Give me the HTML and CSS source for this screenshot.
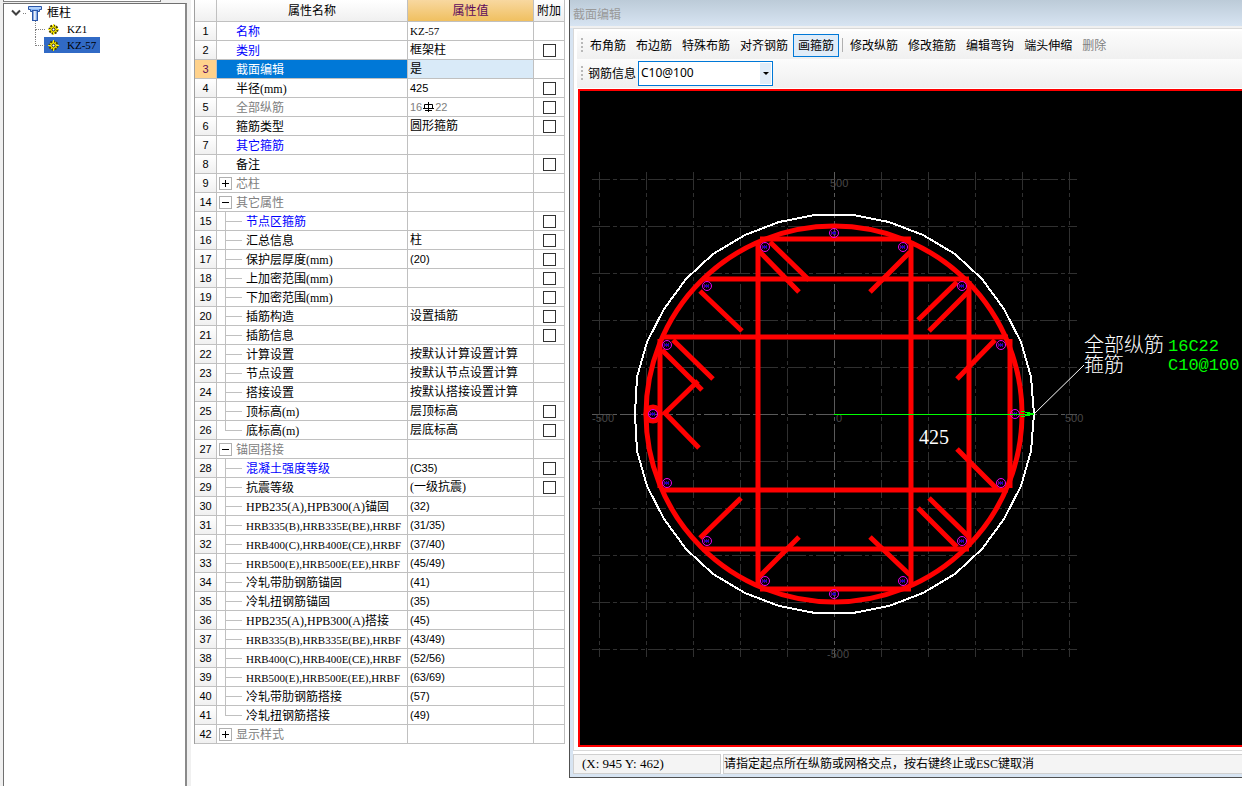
FILE: index.html
```html
<!DOCTYPE html>
<html lang="zh-CN">

<head>
    <meta charset="utf-8">
    <title>截面编辑</title>
    <link rel="stylesheet" href="styles.css">
</head>

<body>
    <div class="app">
        <div class="tree-panel">
            <div class="tree-search"></div>
            <div class="tree">
                <div class="tree-root">
                    <svg class="chevron" width="10" height="8" viewBox="0 0 10 8"><path d="M1 1.5 L5 5.5 L9 1.5" fill="none" stroke="#404040" stroke-width="2"/></svg>
                    <span class="dots"></span>
                    <svg width="16" height="16" viewBox="0 0 16 16">
                        <defs>
                            <linearGradient id="column"><stop offset="0" stop-color="#2a62c8"/><stop offset="0.45" stop-color="#fff"/><stop offset="1" stop-color="#3c78dc"/></linearGradient>
                        </defs>
                        <path d="M1.5 1.5 h13 v3 h-2 v2 h-9 v-2 h-2 z" fill="#8ab8f8" stroke="#2a56a8"/>
                        <rect x="5.500" y="5.500" width="5" height="10" fill="url(#column)" stroke="#2a56a8"/>
                        <path d="M2 3 h12" stroke="#d8ebff"/>
                    </svg>
                    <span class="tree-label">框柱</span>
                </div>
                <ul>
                    <li><a href="#"><svg class="sun" width="11" height="11" viewBox="0 0 11 11"><circle cx="5.500" cy="5.500" r="4" fill="#ffee00" stroke="#4c4600" stroke-width="2" stroke-dasharray="2 1"/><path d="M5.500 0 v3 M5.500 8 v3 M0 5.500 h3 M8 5.500 h3" stroke="#ffee00"/><circle cx="5.500" cy="5.500" r="1.500" fill="#fff" stroke="#222"/></svg>KZ1</a></li>
                    <li><a href="#" class="active"><svg class="sun" width="11" height="11" viewBox="0 0 11 11"><circle cx="5.500" cy="5.500" r="4" fill="#ffee00" stroke="#4c4600" stroke-width="2" stroke-dasharray="2 1"/><path d="M5.500 0 v3 M5.500 8 v3 M0 5.500 h3 M8 5.500 h3" stroke="#ffee00"/><circle cx="5.500" cy="5.500" r="1.500" fill="#fff" stroke="#222"/></svg>KZ-57</a></li>
                </ul>
            </div>
        </div>

        <div class="property-panel">
            <table class="properties">
                <colgroup>
                    <col class="col-num">
                    <col class="col-name">
                    <col class="col-value">
                    <col class="col-extra">
                </colgroup>
                <thead>
                    <tr><th></th><th>属性名称</th><th class="current">属性值</th><th>附加</th></tr>
                </thead>
                <tbody>
                    <tr><th>1</th><td class="name blue">名称</td><td class="steel">KZ-57</td><td></td></tr>
                    <tr><th>2</th><td class="name blue">类别</td><td>框架柱</td><td><input type="checkbox" aria-label="类别"></td></tr>
                    <tr class="selected"><th>3</th><td class="name">截面编辑</td><td>是</td><td></td></tr>
                    <tr><th>4</th><td class="name">半径(mm)</td><td class="num">425</td><td><input type="checkbox" aria-label="半径"></td></tr>
                    <tr><th>5</th><td class="name gray">全部纵筋</td><td class="num gray">16<svg class="grade" width="11" height="10" viewBox="0 0 11 10"><path d="M5.500 0 v10 M1.500 2.500 h8 v4 h-8 z M0 6.500 h11 M2 8.500 h7" fill="none" stroke="#000"/></svg>22</td><td><input type="checkbox" aria-label="全部纵筋"></td></tr>
                    <tr><th>6</th><td class="name">箍筋类型</td><td>圆形箍筋</td><td><input type="checkbox" aria-label="箍筋类型"></td></tr>
                    <tr><th>7</th><td class="name blue">其它箍筋</td><td></td><td></td></tr>
                    <tr><th>8</th><td class="name">备注</td><td></td><td><input type="checkbox" aria-label="备注"></td></tr>
                    <tr><th>9</th><td class="group"><button class="toggle plus" aria-label="展开"></button>芯柱</td><td></td><td></td></tr>
                    <tr><th>14</th><td class="group"><button class="toggle" aria-label="折叠"></button>其它属性</td><td></td><td></td></tr>
                    <tr><th>15</th><td class="child blue">节点区箍筋</td><td></td><td><input type="checkbox" aria-label="节点区箍筋"></td></tr>
                    <tr><th>16</th><td class="child">汇总信息</td><td>柱</td><td><input type="checkbox" aria-label="汇总信息"></td></tr>
                    <tr><th>17</th><td class="child">保护层厚度(mm)</td><td class="num">(20)</td><td><input type="checkbox" aria-label="保护层厚度"></td></tr>
                    <tr><th>18</th><td class="child">上加密范围(mm)</td><td></td><td><input type="checkbox" aria-label="上加密范围"></td></tr>
                    <tr><th>19</th><td class="child">下加密范围(mm)</td><td></td><td><input type="checkbox" aria-label="下加密范围"></td></tr>
                    <tr><th>20</th><td class="child">插筋构造</td><td>设置插筋</td><td><input type="checkbox" aria-label="插筋构造"></td></tr>
                    <tr><th>21</th><td class="child">插筋信息</td><td></td><td><input type="checkbox" aria-label="插筋信息"></td></tr>
                    <tr><th>22</th><td class="child">计算设置</td><td>按默认计算设置计算</td><td></td></tr>
                    <tr><th>23</th><td class="child">节点设置</td><td>按默认节点设置计算</td><td></td></tr>
                    <tr><th>24</th><td class="child">搭接设置</td><td>按默认搭接设置计算</td><td></td></tr>
                    <tr><th>25</th><td class="child">顶标高(m)</td><td>层顶标高</td><td><input type="checkbox" aria-label="顶标高"></td></tr>
                    <tr><th>26</th><td class="child last">底标高(m)</td><td>层底标高</td><td><input type="checkbox" aria-label="底标高"></td></tr>
                    <tr><th>27</th><td class="group"><button class="toggle" aria-label="折叠"></button>锚固搭接</td><td></td><td></td></tr>
                    <tr><th>28</th><td class="child blue">混凝土强度等级</td><td class="num">(C35)</td><td><input type="checkbox" aria-label="混凝土强度等级"></td></tr>
                    <tr><th>29</th><td class="child">抗震等级</td><td>(一级抗震)</td><td><input type="checkbox" aria-label="抗震等级"></td></tr>
                    <tr><th>30</th><td class="child">HPB235(A),HPB300(A)锚固</td><td class="num">(32)</td><td></td></tr>
                    <tr><th>31</th><td class="child steel">HRB335(B),HRB335E(BE),HRBF</td><td class="num">(31/35)</td><td></td></tr>
                    <tr><th>32</th><td class="child steel">HRB400(C),HRB400E(CE),HRBF</td><td class="num">(37/40)</td><td></td></tr>
                    <tr><th>33</th><td class="child steel">HRB500(E),HRB500E(EE),HRBF</td><td class="num">(45/49)</td><td></td></tr>
                    <tr><th>34</th><td class="child">冷轧带肋钢筋锚固</td><td class="num">(41)</td><td></td></tr>
                    <tr><th>35</th><td class="child">冷轧扭钢筋锚固</td><td class="num">(35)</td><td></td></tr>
                    <tr><th>36</th><td class="child">HPB235(A),HPB300(A)搭接</td><td class="num">(45)</td><td></td></tr>
                    <tr><th>37</th><td class="child steel">HRB335(B),HRB335E(BE),HRBF</td><td class="num">(43/49)</td><td></td></tr>
                    <tr><th>38</th><td class="child steel">HRB400(C),HRB400E(CE),HRBF</td><td class="num">(52/56)</td><td></td></tr>
                    <tr><th>39</th><td class="child steel">HRB500(E),HRB500E(EE),HRBF</td><td class="num">(63/69)</td><td></td></tr>
                    <tr><th>40</th><td class="child">冷轧带肋钢筋搭接</td><td class="num">(57)</td><td></td></tr>
                    <tr><th>41</th><td class="child last">冷轧扭钢筋搭接</td><td class="num">(49)</td><td></td></tr>
                    <tr><th>42</th><td class="group"><button class="toggle plus" aria-label="展开"></button>显示样式</td><td></td><td></td></tr>
                </tbody>
            </table>
        </div>

        <div class="dialog">
            <div class="title-bar">截面编辑</div>
            <div class="dialog-body">
                <div class="toolbars">
                    <div class="toolbar">
                        <span class="grip"></span>
                        <button>布角筋</button>
                        <button>布边筋</button>
                        <button>特殊布筋</button>
                        <button>对齐钢筋</button>
                        <button class="active">画箍筋</button>
                        <span class="separator"></span>
                        <button>修改纵筋</button>
                        <button>修改箍筋</button>
                        <button>编辑弯钩</button>
                        <button>端头伸缩</button>
                        <button disabled>删除</button>
                    </div>
                    <div class="toolbar">
                        <span class="grip"></span>
                        <label for="rebar-info">钢筋信息</label>
                        <div class="combo">
                            <select id="rebar-info">
                                <option>C10@100</option>
                            </select>
                            <span class="combo-arrow"></span>
                        </div>
                    </div>
                </div>
                <div class="canvas">
                    <!-- origin is the centre of the column section -->
                    <svg viewBox="-254 -323 662 654" preserveAspectRatio="xMinYMid meet">
                        <g class="grid">
                            <path d="M-242 -235 H243 M-242 -188 H243 M-242 -141 H243 M-242 -94 H243 M-242 -47 H243 M-242 47 H243 M-242 94 H243 M-242 141 H243 M-242 188 H243 M-242 235 H243"/>
                            <path d="M-235 -242 V243 M-188 -242 V243 M-141 -242 V243 M-94 -242 V243 M-47 -242 V243 M47 -242 V243 M94 -242 V243 M141 -242 V243 M188 -242 V243 M235 -242 V243"/>
                            <path class="axis" d="M-242 0 H243 M0 -242 V243"/>
                        </g>
                        <g class="grid-text">
                            <text x="-4" y="-227">500</text>
                            <text x="-242" y="8">-500</text>
                            <text x="2" y="8">0</text>
                            <text x="231" y="8">500</text>
                            <text x="-7" y="244">-500</text>
                        </g>

                        <polygon class="outline" points="200,0 197,-37 187,-72 170,-105 148,-135 121,-160 89,-179 55,-192 19,-199 -19,-199 -55,-192 -89,-179 -121,-160 -148,-135 -170,-105 -187,-72 -197,-37 -199,0 -197,37 -187,72 -170,105 -148,135 -121,160 -89,179 -55,192 -19,199 19,199 55,192 89,179 121,160 148,135 170,105 187,72 197,37"/>

                        <g class="stirrup">
                            <circle cx="0" cy="0" r="188"/>
                            <path d="M-74 -175 H77 M-132 -135 H135 M-172 -77 H174 M-172 76 H174 M-132 135 H135 M-74 175 H77"/>
                            <path d="M-174 -75 V74 M-76 -173 V173 M77 -173 V173 M135 -133 V133 M176 -75 V74"/>
                            <path d="M-76 -164 L-35 -122 M-64 -172 L-25 -134 M-134 -123 L-92 -83 M-172 -64 L-132 -24 M-161 -74 L-121 -35 M-136 -33 L-169 -1 L-135 34"/>
                            <path d="M76 -162 L36 -122 M123 -132 L84 -94 M135 -123 L95 -83 M161 -74 L123 -35"/>
                            <path d="M-134 124 L-93 84 M-75 163 L-35 123"/>
                            <path d="M123 35 L163 75 M95 84 L135 123 M84 94 L123 133 M36 123 L76 161"/>
                            <circle cx="-181" cy="0" r="7"/>
                        </g>

                        <defs>
                            <g id="bar">
                                <circle r="4.500" fill="none" stroke="#ee00ee"/>
                                <path d="M-3 -1 H3 M-3 1 H3" stroke="#c000e0" stroke-dasharray="1 1"/>
                                <path d="M-2 0 H2" stroke="#2000c0" stroke-width="2"/>
                            </g>
                        </defs>
                        <use href="#bar" x="0" y="-181"/>
                        <use href="#bar" x="69" y="-167"/>
                        <use href="#bar" x="128" y="-128"/>
                        <use href="#bar" x="167" y="-69"/>
                        <use href="#bar" x="181" y="0"/>
                        <use href="#bar" x="167" y="69"/>
                        <use href="#bar" x="128" y="127"/>
                        <use href="#bar" x="69" y="167"/>
                        <use href="#bar" x="0" y="180"/>
                        <use href="#bar" x="-69" y="167"/>
                        <use href="#bar" x="-127" y="127"/>
                        <use href="#bar" x="-167" y="69"/>
                        <use href="#bar" x="-181" y="0"/>
                        <use href="#bar" x="-167" y="-69"/>
                        <use href="#bar" x="-127" y="-128"/>
                        <use href="#bar" x="-69" y="-167"/>

                        <path class="radius" d="M0 0 H200 M187 -3 L200 0 L187 3"/>
                        <path d="M193 -2 L200 0 L193 2 z" fill="#00ff00"/>
                        <path class="leader" d="M200 0 L250 -49"/>
                        <text class="radius-text" x="85" y="30">425</text>
                        <text class="note" x="250" y="-62">全部纵筋</text>
                        <text class="note" x="250" y="-42">箍筋</text>
                        <text class="note-value" x="334" y="-63">16C22</text>
                        <text class="note-value" x="334" y="-44">C10@100</text>
                    </svg>
                </div>
            </div>
            <div class="status-bar">
                <div class="coords">(X: 945 Y: 462)</div>
                <div class="message">请指定起点所在纵筋或网格交点，按右键终止或ESC键取消</div>
            </div>
        </div>
    </div>
</body>

</html>
```
FILE: styles.css
```css
* {
    box-sizing: border-box;
}

body {
    margin: 0;
    font-family: "Liberation Serif", "Noto Sans CJK SC", sans-serif;
    font-size: 12px;
    line-height: 18px;
    color: #000;
    background-color: #fff;
}

button, select {
    font: inherit;
    color: inherit;
    margin: 0;
    padding: 0;
}

.app {
    display: flex;
    height: 100vh;
    overflow: hidden;
}

/* component tree */
.tree-panel {
    display: flex;
    flex-direction: column;
    flex: 0 0 191px;
    padding: 0 4px 0 3px;
    background-color: #f0f0f0;
}

.tree-search {
    width: 158px;
    height: 2px;
    background-color: #fff;
    border: 1px solid #808080;
    border-top: none;
}

.tree {
    flex: 1;
    margin-top: 1px;
    padding-top: 1px;
    background-color: #fff;
    border: 1px solid #707070;
    border-right: 2px solid #8a8a8a;
    border-bottom: none;
}

.tree-root {
    display: flex;
    align-items: center;
    height: 16px;
    padding-left: 7px;
}

.dots {
    width: 3px;
    margin: 0 1px 0 2px;
    border-top: 1px dotted #808080;
}

.tree-label {
    margin-left: 4px;
}

.tree ul {
    list-style: none;
    margin: 0;
    padding: 0 0 0 31px;
}

.tree li {
    display: flex;
    position: relative;
    height: 16px;
    padding-left: 9px;
    font-size: 11px;
}

.tree li::before {
    content: "";
    position: absolute;
    left: 0;
    top: 0;
    width: 9px;
    height: 8px;
    border-left: 1px dotted #808080;
    border-bottom: 1px dotted #808080;
}

.tree li:first-child::after {
    content: "";
    position: absolute;
    left: 0;
    top: 8px;
    height: 8px;
    border-left: 1px dotted #808080;
}

.tree a {
    display: flex;
    align-items: center;
    padding: 0 4px;
    color: #000;
    text-decoration: none;
}

.tree a.active {
    background-color: #316ac5;
}

.sun {
    margin-right: 8px;
}

/* property table */
.property-panel {
    flex: 0 0 378px;
    padding-left: 3px;
}

.properties {
    width: 371px;
    table-layout: fixed;
    border-collapse: separate;
    border-spacing: 0;
    border-left: 1px solid #a0a0a0;
}

.col-num {
    width: 22px;
}

.col-name {
    width: 191px;
}

.col-value {
    width: 126px;
}

.col-extra {
    width: 31px;
}

.properties th,
.properties td {
    height: 19px;
    padding: 0;
    line-height: 18px;
    border-right: 1px solid #c0c0c0;
    border-bottom: 1px solid #c0c0c0;
    font-weight: normal;
    white-space: nowrap;
}

.properties td {
    padding-left: 2px;
}

.properties thead th {
    height: 22px;
    background: linear-gradient(#fff, #f0f0f0);
}

.properties thead .current {
    color: #5c0a5c;
    background: linear-gradient(#f8d8a0, #f0c060);
}

.properties tbody th {
    font-family: "Liberation Sans", sans-serif;
    font-size: 11px;
    background: linear-gradient(#fff, #f0f0f0);
}

.properties .num {
    font-family: "Liberation Sans", sans-serif;
    font-size: 11px;
}

.properties .name,
.properties .group,
.properties .child {
    padding-top: 2px;
    line-height: 16px;
}

.properties .name {
    padding-left: 19px;
}

.properties .group {
    color: #808080;
}

.properties .child {
    position: relative;
    padding-left: 29px;
}

.child::before {
    content: "";
    position: absolute;
    left: 8px;
    top: 0;
    height: 100%;
    border-left: 1px solid #c0c0c0;
}

.child.last::before {
    height: 9px;
}

.child::after {
    content: "";
    position: absolute;
    left: 8px;
    top: 9px;
    width: 17px;
    border-top: 1px solid #c0c0c0;
}

.properties .steel {
    font-size: 11px;
}

.properties .blue {
    color: #0000ff;
}

.properties .gray {
    color: #808080;
}

.grade {
    margin: 0 1px;
    vertical-align: -1px;
}

.properties td:last-child {
    padding: 0;
}

.properties input {
    display: block;
    appearance: none;
    width: 13px;
    height: 13px;
    margin: 0 auto;
    background-color: #fff;
    border: 1px solid #333;
}

.properties .selected th {
    color: #5c0a5c;
    background: #ffd28c;
}

.properties .selected td:nth-child(2) {
    color: #fff;
    background-color: #0078d7;
}

.properties .selected td:nth-child(3) {
    background-color: #d9eaf8;
}

.toggle {
    display: inline-block;
    width: 13px;
    height: 13px;
    margin-right: 4px;
    vertical-align: -1px;
    border: 1px solid #b0b0b0;
    background: linear-gradient(#000, #000) center / 7px 1px no-repeat #fff;
}

.toggle.plus {
    background: linear-gradient(#000, #000) center / 7px 1px no-repeat,
        linear-gradient(#000, #000) center / 1px 7px no-repeat #fff;
}

/* section editor */
.dialog {
    display: flex;
    flex-direction: column;
    flex: 1;
    min-width: 0;
    margin-bottom: 8px;
    padding: 0 0 3px 3px;
    background-color: #d7e4f2;
    border-left: 1px solid #505050;
    border-bottom: 1px solid #505050;
    font-family: "Noto Sans CJK SC", sans-serif;
}

.title-bar {
    height: 28px;
    margin-left: -3px;
    padding-left: 3px;
    line-height: 28px;
    color: #999;
    background: linear-gradient(#bccbd8, #d7e4f2 26px, #f0f0f0 26px);
}

.dialog-body {
    display: flex;
    flex-direction: column;
    flex: 1;
    min-height: 0;
    padding: 2px 0 3px 3px;
    background-color: #fff;
    border: 1px solid #d8d8d8;
    border-right: none;
}

.toolbars {
    height: 58px;
    background-color: #f0f0f0;
    border-bottom: 1px solid #fff;
}

.toolbar {
    display: flex;
    align-items: center;
    height: 28px;
    padding-left: 4px;
    background: linear-gradient(#fcfcfc, #f0f0f0);
}

.grip {
    width: 2px;
    height: 14px;
    margin-right: 2px;
    background: repeating-linear-gradient(#b8b8b8 0 2px, transparent 2px 4px);
}

.toolbar button {
    height: 23px;
    padding: 0 4px;
    line-height: 20px;
    background: none;
    border: 1px solid transparent;
}

.toolbar button.active {
    background-color: #e0ecf8;
    border-color: #0078d7;
}

.toolbar button:disabled {
    color: #808080;
}

.separator {
    height: 14px;
    margin: 0 2px 0 3px;
    border-left: 1px solid #b0b0b0;
}

.toolbar label {
    margin: 0 2px 0 3px;
}

.combo {
    position: relative;
    width: 135px;
    height: 25px;
}

.combo select {
    appearance: none;
    width: 100%;
    height: 100%;
    padding: 0 2px;
    font-family: "Noto Sans", sans-serif;
    background-color: #fff;
    border: 1px solid #0078d7;
    border-radius: 0;
}

.combo-arrow {
    position: absolute;
    top: 2px;
    right: 2px;
    width: 11px;
    height: 21px;
    background-color: #e0ecf8;
    pointer-events: none;
}

.combo-arrow::before {
    content: "";
    position: absolute;
    left: 3px;
    top: 9px;
    border: 3px solid transparent;
    border-top-color: #000;
    border-bottom: none;
}

.canvas {
    flex: 1;
    min-height: 0;
    margin-left: 1px;
    background-color: #000;
    border: 2px solid #ff0000;
    border-right: none;
}

.canvas svg {
    display: block;
    width: 100%;
    height: 100%;
}

.grid path {
    fill: none;
    stroke: #303030;
    stroke-dasharray: 18 3 4 3;
    shape-rendering: crispEdges;
}

.grid .axis {
    stroke: #5a5a5a;
}

.grid-text {
    font-family: "Liberation Sans", sans-serif;
    font-size: 11px;
    fill: #484848;
}

.outline {
    fill: none;
    stroke: #fff;
    stroke-width: 2;
    shape-rendering: crispEdges;
}

.stirrup {
    fill: none;
    stroke: #ff0000;
    stroke-width: 5;
}

.radius {
    fill: none;
    stroke: #00ff00;
    shape-rendering: crispEdges;
}

.leader {
    stroke: #fff;
}

.radius-text {
    font-family: "Liberation Serif", serif;
    font-size: 20px;
    fill: #fff;
}

.note {
    font-family: "Liberation Serif", "Noto Sans CJK SC", sans-serif;
    font-size: 20px;
    font-weight: 300;
    fill: #fff;
}

.note-value {
    font-family: "Liberation Mono", monospace;
    font-size: 17px;
    fill: #00ff00;
}

.status-bar {
    display: flex;
    height: 23px;
    padding-top: 3px;
    background-color: #fff;
    line-height: 18px;
}

.coords {
    width: 148px;
    padding-left: 8px;
    font-family: "Liberation Serif", serif;
    font-size: 13px;
    background-color: #f4f4f4;
    border: 1px solid #d0d0d0;
}

.message {
    flex: 1;
    margin-left: 2px;
    font-family: "Liberation Serif", "Noto Sans CJK SC", sans-serif;
    background-color: #f4f4f4;
    border: 1px solid #d0d0d0;
    border-right: none;
    white-space: nowrap;
}
```
